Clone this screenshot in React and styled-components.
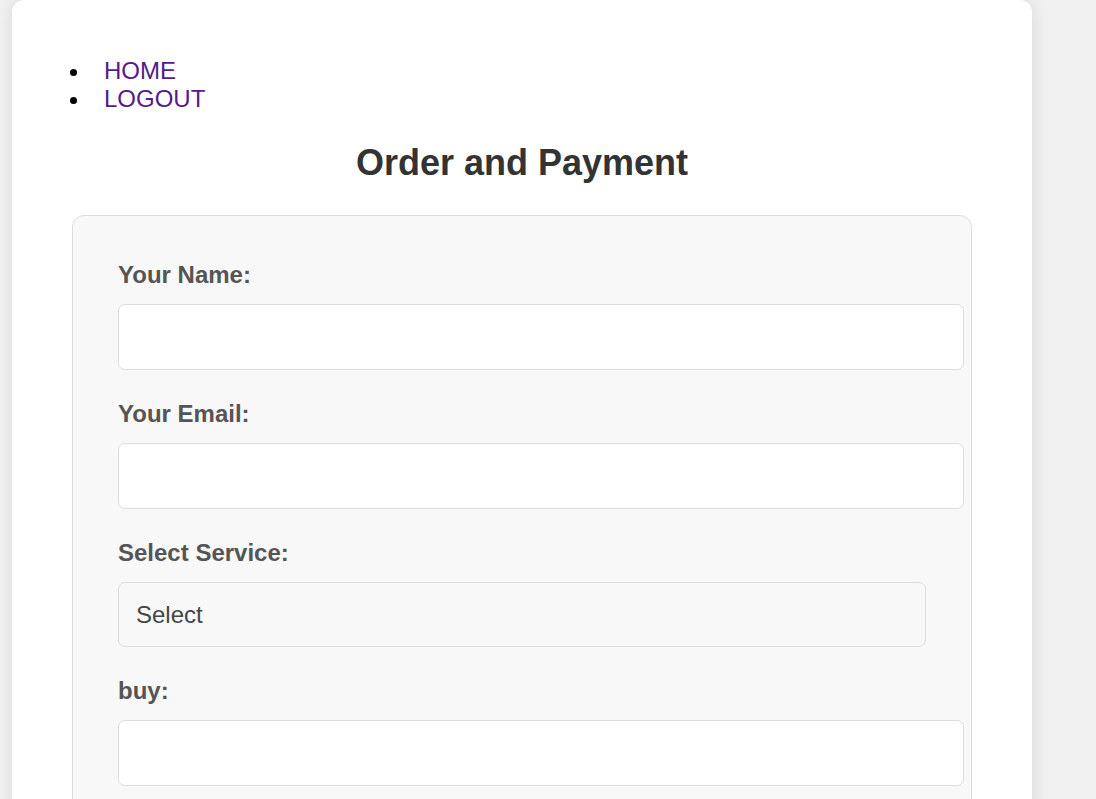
import React from "react";
import styled, { createGlobalStyle } from "styled-components";

const Global = createGlobalStyle`
  html, body {
    margin: 0;
    padding: 0;
    background: #f0f0f0;
    font-family: "Liberation Sans", Arial, sans-serif;
  }
  body { padding: 0 12px; }
`;

const Card = styled.div`
  width: 1020px;
  box-sizing: border-box;
  background: #ffffff;
  border-radius: 12px;
  box-shadow: 0 0 15px rgba(0, 0, 0, 0.1);
  padding: 57px 60px 40px;
  min-height: 900px;
`;

const Nav = styled.ul`
  margin: 0;
  padding-left: 19px;
  font-size: 24px;
  line-height: normal;
`;

const NavItem = styled.li`
  list-style: disc;
`;

const NavLink = styled.a`
  margin-left: 13px;
  color: #551a8b;
  text-decoration: none;
`;

const Title = styled.h2`
  margin: 29px 0 31px;
  text-align: center;
  font-size: 36px;
  font-weight: bold;
  color: #333333;
  line-height: normal;
`;

const Form = styled.form`
  background: #f8f8f8;
  border: 1px solid #dddddd;
  border-radius: 12px;
  padding: 45px;
  width: 808px;
`;

const Field = styled.div`
  margin-bottom: 30px;
  &:last-child { margin-bottom: 0; }
`;

const Label = styled.label`
  display: block;
  font-size: 24px;
  font-weight: bold;
  color: #555555;
  line-height: normal;
  margin-bottom: 15px;
`;

const Input = styled.input`
  display: block;
  box-sizing: content-box;
  width: 100%;
  height: 28px;
  padding: 18px;
  margin: 0;
  border: 1px solid #dddddd;
  border-radius: 7px;
  background: #ffffff;
  font-family: "Liberation Sans", Arial, sans-serif;
  font-size: 24px;
  color: #333;
  outline: none;
`;

const Select = styled.select`
  display: block;
  box-sizing: border-box;
  width: 100%;
  height: 65px;
  padding: 0 17px;
  margin: 0;
  border: 1px solid #dddddd;
  border-radius: 7px;
  background: #f8f8f8;
  appearance: none;
  -webkit-appearance: none;
  font-family: "Liberation Sans", Arial, sans-serif;
  font-size: 24px;
  color: #444444;
  outline: none;
`;

export default function App() {
  return (
    <>
      <Global />
      <Card>
        <Nav>
          <NavItem><NavLink href="#">HOME</NavLink></NavItem>
          <NavItem><NavLink href="#">LOGOUT</NavLink></NavItem>
        </Nav>
        <Title>Order and Payment</Title>
        <Form onSubmit={(e) => e.preventDefault()}>
          <Field>
            <Label htmlFor="name">Your Name:</Label>
            <Input id="name" type="text" />
          </Field>
          <Field>
            <Label htmlFor="email">Your Email:</Label>
            <Input id="email" type="email" />
          </Field>
          <Field>
            <Label htmlFor="service">Select Service:</Label>
            <Select id="service" defaultValue="">
              <option value="">Select</option>
            </Select>
          </Field>
          <Field>
            <Label htmlFor="buy">buy:</Label>
            <Input id="buy" type="text" />
          </Field>
        </Form>
      </Card>
    </>
  );
}
